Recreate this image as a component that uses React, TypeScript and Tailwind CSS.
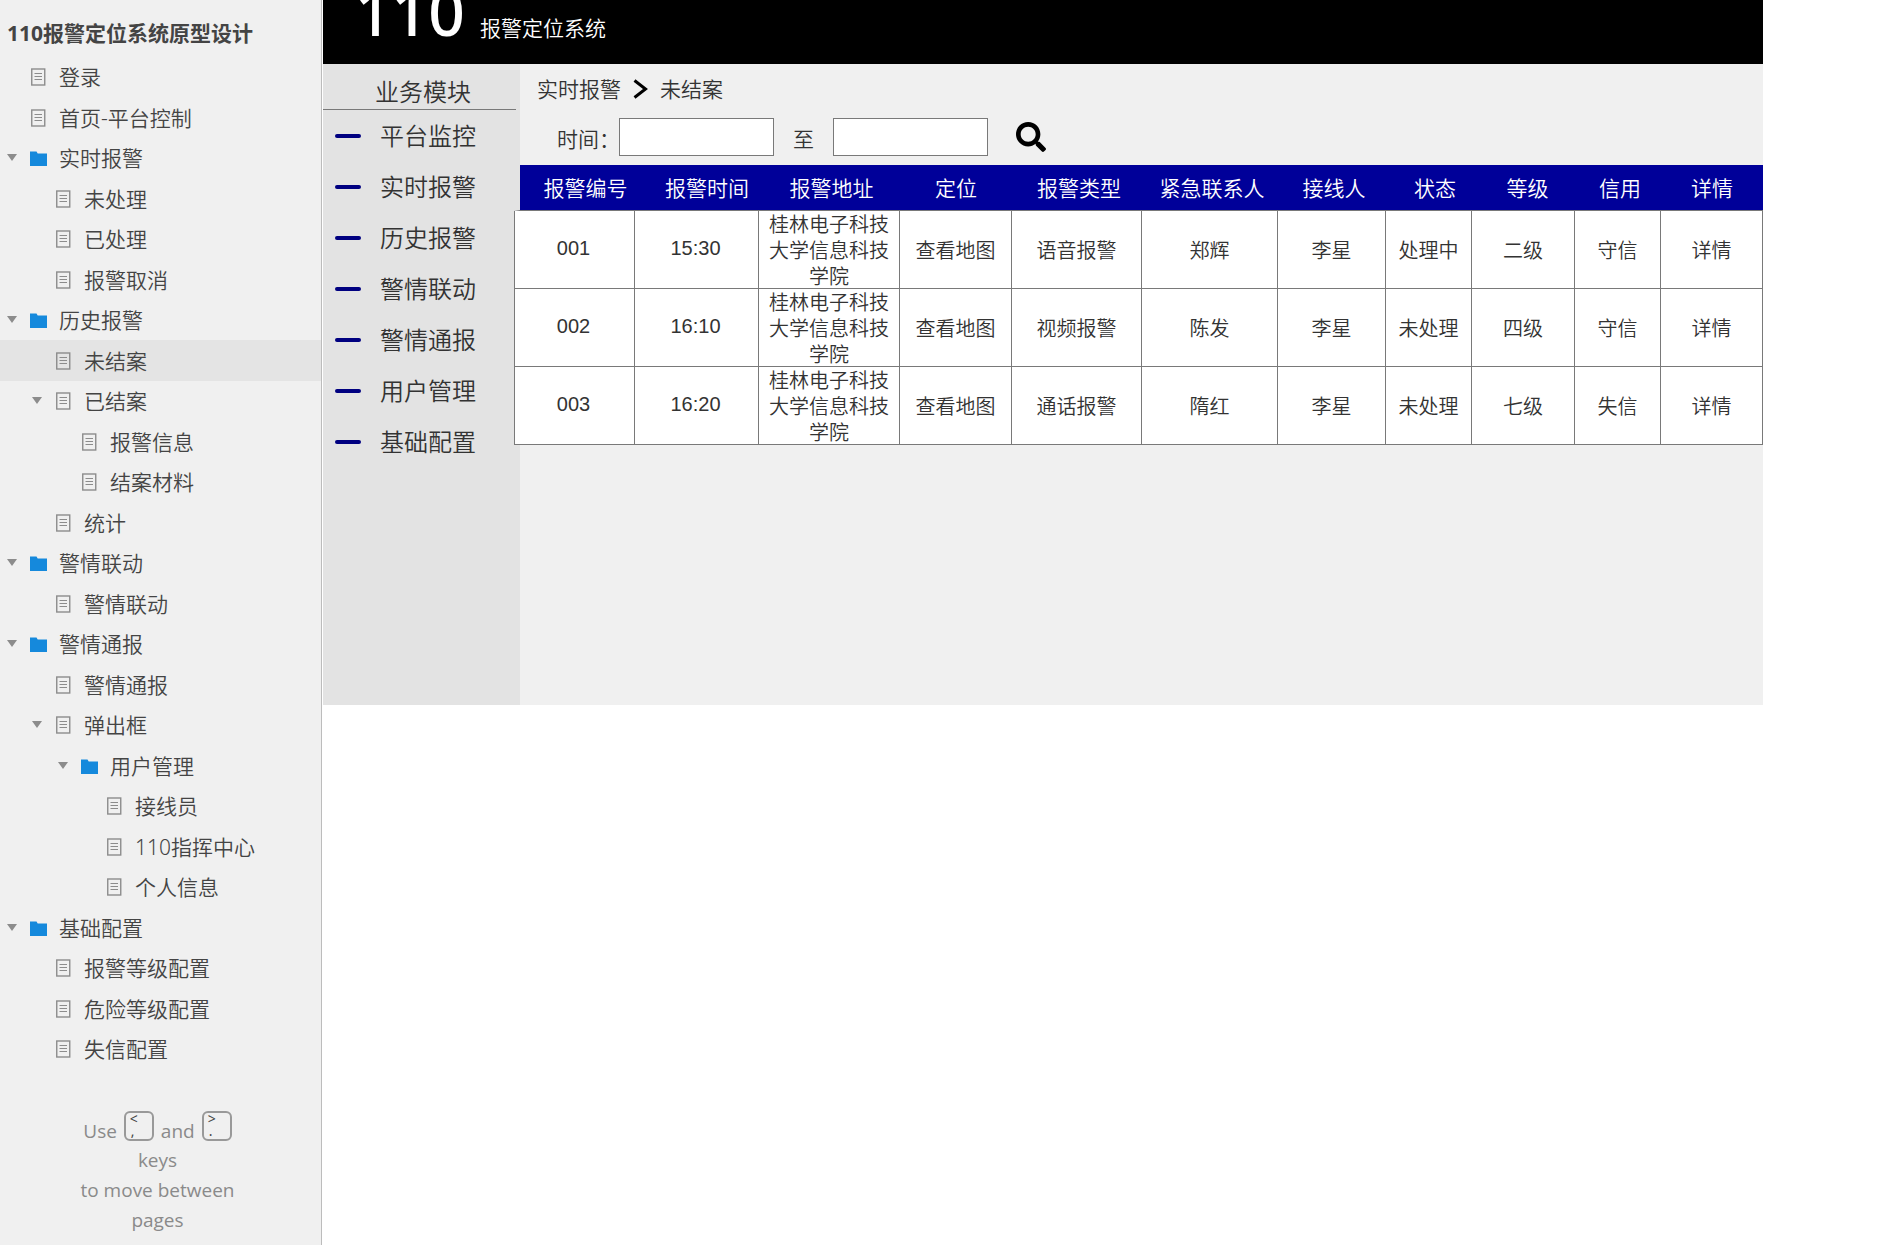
import React from "react";
import { FaSearch } from "react-icons/fa";
import clsx from "clsx";

type TreeNode = {
  title: string;
  level: number;
  folder?: boolean;
  open?: boolean;
  active?: boolean;
};

const tree: TreeNode[] = [
  { title: "登录", level: 0 },
  { title: "首页-平台控制", level: 0 },
  { title: "实时报警", level: 0, folder: true, open: true },
  { title: "未处理", level: 1 },
  { title: "已处理", level: 1 },
  { title: "报警取消", level: 1 },
  { title: "历史报警", level: 0, folder: true, open: true },
  { title: "未结案", level: 1, active: true },
  { title: "已结案", level: 1, open: true },
  { title: "报警信息", level: 2 },
  { title: "结案材料", level: 2 },
  { title: "统计", level: 1 },
  { title: "警情联动", level: 0, folder: true, open: true },
  { title: "警情联动", level: 1 },
  { title: "警情通报", level: 0, folder: true, open: true },
  { title: "警情通报", level: 1 },
  { title: "弹出框", level: 1, open: true },
  { title: "用户管理", level: 2, folder: true, open: true },
  { title: "接线员", level: 3 },
  { title: "110指挥中心", level: 3 },
  { title: "个人信息", level: 3 },
  { title: "基础配置", level: 0, folder: true, open: true },
  { title: "报警等级配置", level: 1 },
  { title: "危险等级配置", level: 1 },
  { title: "失信配置", level: 1 },
];

const indents = ["pl-[7px]", "pl-[32px]", "pl-[58px]", "pl-[83px]"];

const modules = [
  "平台监控",
  "实时报警",
  "历史报警",
  "警情联动",
  "警情通报",
  "用户管理",
  "基础配置",
];

const columns = [
  { title: "报警编号", col: "w-[121px]", th: "pl-4" },
  { title: "报警时间", col: "w-[124px]", th: "pl-5" },
  { title: "报警地址", col: "w-[141px]", th: "pl-1" },
  { title: "定位", col: "w-[112px]", th: "" },
  { title: "报警类型", col: "w-[130px]", th: "pl-1" },
  { title: "紧急联系人", col: "w-[136px]", th: "pl-1" },
  { title: "接线人", col: "w-[108px]", th: "pl-1" },
  { title: "状态", col: "w-[86px]", th: "pl-3" },
  { title: "等级", col: "w-[103px]", th: "pl-2" },
  { title: "信用", col: "w-[86px]", th: "pl-1" },
  { title: "详情", col: "w-[102px]", th: "" },
];

const address = "桂林电子科技大学信息科技学院";

const rows = [
  ["001", "15:30", address, "查看地图", "语音报警", "郑辉", "李星", "处理中", "二级", "守信", "详情"],
  ["002", "16:10", address, "查看地图", "视频报警", "陈发", "李星", "未处理", "四级", "守信", "详情"],
  ["003", "16:20", address, "查看地图", "通话报警", "隋红", "李星", "未处理", "七级", "失信", "详情"],
];

const PageIcon = () => (
  <svg width="17" height="18" viewBox="0 0 17 18" fill="none" stroke="#8c8c8c">
    <rect x="1.75" y="1" width="13" height="16" strokeWidth="1.4" />
    <path d="M4.5 5.5h7.5M4.5 8.5h7.5M4.5 11.5h7.5" strokeWidth="1.2" />
  </svg>
);

const FolderIcon = () => (
  <svg width="17" height="18" viewBox="0 0 17 18" fill="#1589dc">
    <path d="M0 2.5h6.5l1.2 2H17V17H0z" />
  </svg>
);

const TreeItem = ({ node }: { node: TreeNode }) => (
  <li
    className={clsx(
      "flex items-center odd:h-10 even:h-[41px]",
      indents[node.level],
      node.active && "bg-[#e4e4e4]"
    )}
  >
    <span className="flex w-[23px] shrink-0">
      {node.open && (
        <button type="button" aria-label={`收起${node.title}`} className="block">
          <svg width="10" height="10" viewBox="0 0 10 10" fill="#8c8c8c">
            <path d="M0 1h10L5 8z" />
          </svg>
        </button>
      )}
    </span>
    <a href="#" className="flex items-center gap-3 whitespace-nowrap">
      {node.folder ? <FolderIcon /> : <PageIcon />}
      <span>{node.title}</span>
    </a>
  </li>
);

const Key = ({ top, bottom }: { top: string; bottom: string }) => (
  <kbd className="flex size-[30px] flex-col rounded-md border-2 border-[#999] pl-1 font-['Noto_Sans',sans-serif] text-[14px] leading-[12px] text-[#444]">
    <span>{top}</span>
    <span className="pl-px">{bottom}</span>
  </kbd>
);

const Sidebar = () => (
  <aside className="w-[322px] shrink-0 border-r border-[#bcbcbc] bg-[#f0f0f0] text-[21px] leading-[30px] text-[#444]">
    <h1 className="pt-[18px] pb-[9px] pl-[7px] font-bold">110报警定位系统原型设计</h1>
    <ul>
      {tree.map((node, i) => (
        <TreeItem key={i} node={node} />
      ))}
    </ul>
    <div className="flex flex-col items-center pt-[42px] pr-[6px] pb-2 font-['Open_Sans',sans-serif] text-[19px] font-normal text-[#8a8a8a]">
      <div className="flex h-[34px] items-start gap-[7px]">
        <span className="pt-[5px]">Use</span>
        <Key top="<" bottom="," />
        <span className="pt-[5px]">and</span>
        <Key top=">" bottom="." />
      </div>
      <span>keys</span>
      <span>to move between</span>
      <span>pages</span>
    </div>
  </aside>
);

const ModuleMenu = () => (
  <nav className="w-[197px] shrink-0 bg-[#e3e3e3] text-[24px] leading-[34px]">
    <h2 className="mr-1 border-b border-[#797979] pt-[11px] pr-[45px] text-right">业务模块</h2>
    <ul>
      {modules.map((item) => (
        <li key={item}>
          <a href="#" className="flex h-[51px] items-center gap-[19px] pl-3">
            <span className="h-1 w-[26px] rounded-full bg-[#000080]" />
            {item}
          </a>
        </li>
      ))}
    </ul>
  </nav>
);

const SearchBar = () => (
  <form className="flex h-[38px] items-center pl-[37px]">
    <label htmlFor="from" className="w-[62px] pt-1 whitespace-nowrap">时间：</label>
    <input id="from" type="text" className="h-[38px] w-[155px] border border-[#797979] bg-white px-2" />
    <label htmlFor="to" className="px-[19px] pt-1">至</label>
    <input id="to" type="text" className="h-[38px] w-[155px] border border-[#797979] bg-white px-2" />
    <button type="button" aria-label="查询" className="ml-7 text-black">
      <FaSearch size={30} />
    </button>
  </form>
);

const AlarmTable = () => (
  <table className="-ml-[6px] w-[calc(100%+6px)] table-fixed border-separate border-spacing-0 text-center">
    <colgroup>
      {columns.map((c) => (
        <col key={c.title} className={c.col} />
      ))}
    </colgroup>
    <thead>
      <tr className="h-[46px] text-white">
        {columns.map((c) => (
          <th
            key={c.title}
            className={clsx(
              "border-b border-b-[#797979] bg-[#000099] bg-clip-padding font-[350] whitespace-nowrap first:border-l-[6px] first:border-l-transparent",
              c.th
            )}
          >
            {c.title}
          </th>
        ))}
      </tr>
    </thead>
    <tbody className="text-[20px] leading-[26px]">
      {rows.map((row) => (
        <tr key={row[0]}>
          {row.map((cell, i) => (
            <td key={i} className="border-r border-b border-[#797979] bg-white first:border-l">
              <div
                className={clsx(
                  "flex h-[77px] items-center justify-center",
                  i < 2 ? "pr-[2px] pb-[3px] font-['Liberation_Sans',sans-serif]" : "pt-[2px]",
                  i === 2 && "px-2"
                )}
              >
                {i === 10 || i === 3 ? <a href="#">{cell}</a> : cell}
              </div>
            </td>
          ))}
        </tr>
      ))}
    </tbody>
  </table>
);

const App = () => {
  return (
    <div className="flex min-h-screen bg-white font-['Noto_Sans','Noto_Sans_CJK_SC',sans-serif] font-[350] text-[#333]">
      <Sidebar />
      <div className="ml-px max-w-[1440px] flex-1">
        <header className="flex h-16 items-baseline overflow-hidden bg-black pl-8 text-white">
          <span className="-mt-5 w-[125px] text-[64px] leading-[64px] font-medium">110</span>
          <span className="text-[21px] leading-[30px]">报警定位系统</span>
        </header>
        <div className="flex min-h-[641px] bg-[#f0f0f0]">
          <ModuleMenu />
          <main className="min-w-0 flex-1 text-[21px] leading-[30px]">
            <div className="flex items-center pt-[10px] pb-[14px] pl-[17px]">
              <a href="#">实时报警</a>
              <svg className="mx-3" width="15" height="20" viewBox="0 0 15 20" fill="none" stroke="#000" strokeWidth="3">
                <path d="M1.5 1.5l11 8.5-11 8.5" />
              </svg>
              <span>未结案</span>
            </div>
            <SearchBar />
            <div className="pt-[9px]">
              <AlarmTable />
            </div>
          </main>
        </div>
      </div>
    </div>
  );
};

export default App;
